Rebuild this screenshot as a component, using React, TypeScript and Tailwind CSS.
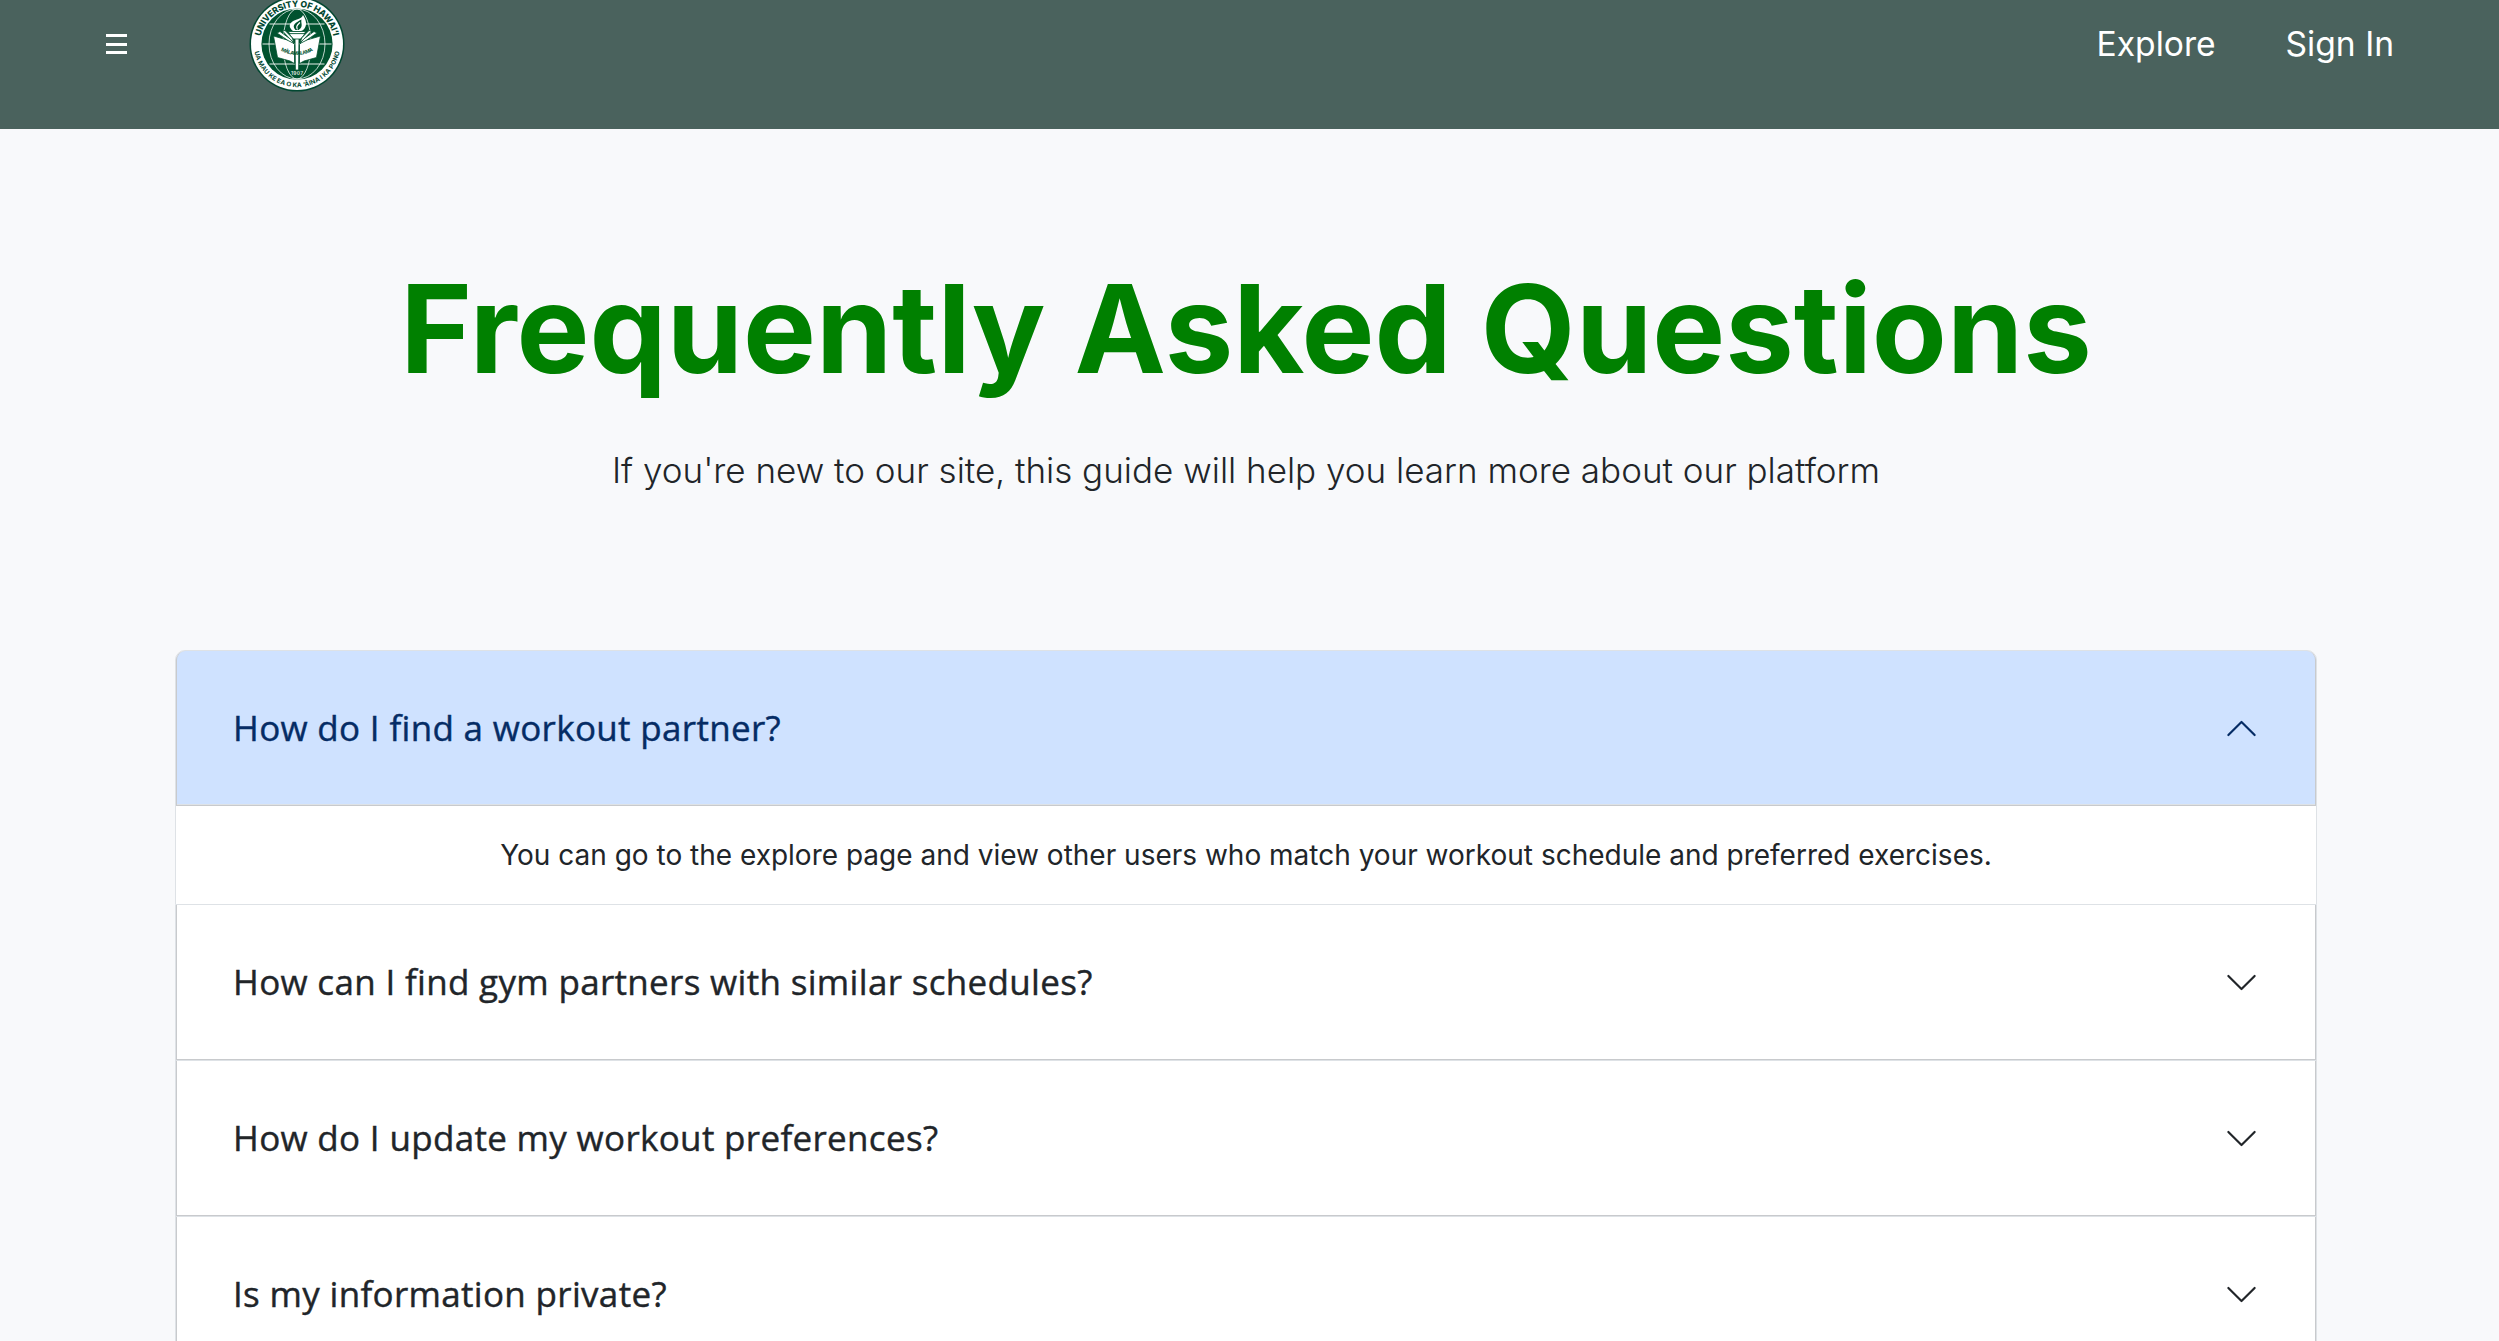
import { useState } from "react";

type Faq = { question: string; answer: string };

const faqs: Faq[] = [
  {
    question: "How do I find a workout partner?",
    answer:
      "You can go to the explore page and view other users who match your workout schedule and preferred exercises.",
  },
  { question: "How can I find gym partners with similar schedules?", answer: "" },
  { question: "How do I update my workout preferences?", answer: "" },
  { question: "Is my information private?", answer: "" },
];

function Seal() {
  return (
    <svg viewBox="-48 -48 96 96" className="size-24" aria-label="University of Hawaiʻi seal">
      <defs>
        <path id="seal-top" d="M-37.2 0A37.2 37.2 0 0 1 37.2 0" />
        <path id="seal-bottom" d="M-43.2 0A43.2 43.2 0 0 0 43.2 0" />
        <path id="seal-motto" d="M-18.500 5.500Q-9 11 0 11Q9 11 18.500 5.500" />
      </defs>
      <circle r="47.5" fill="#024731" />
      <circle r="46" fill="#fff" />
      <circle r="35.6" fill="#00522f" />
      <g fill="none" stroke="#fff" strokeOpacity="0.75" strokeWidth="1">
        <ellipse rx="28" ry="35" />
        <ellipse rx="14" ry="35" />
        <path d="M-27.5 -20H27.5M-34.5 0H34.5M-27.5 20H27.5" strokeWidth="1.4" strokeOpacity="0.6" />
      </g>
      <g fill="#fff" stroke="#00522f" strokeWidth="0.8">
        <path d="M-23.500 -8L-8 -3.500Q-4 -2 -2.500 0.500V19.500L-7 17L-19.500 13.500Z" />
        <path d="M23.500 -8L8 -3.500Q4 -2 2.500 0.500V19.500L7 17L19.500 13.500Z" />
        <path d="M-20 -11L-17 -12.500L-6 -4.500L-3 -0.500L-9 -3.500Z" />
        <path d="M20 -11L17 -12.500L6 -4.500L3 -0.500L9 -3.500Z" />
        <path d="M-14.500 -13L-12 -13.500L-5 -6.500L-3 -1.500L-6.500 -4.500Z" />
        <path d="M14.500 -13L12 -13.500L5 -6.500L3 -1.500L6.500 -4.500Z" />
        <path d="M-2 -6H2L1.600 26H-1.600Z" />
        <path d="M-8.500 -12.500H8.500L7 -9L3.500 -5H-3.500L-7 -9Z" />
      </g>
      <path d="M-8 -10.400H8" stroke="#00522f" strokeWidth="0.9" />
      <path
        d="M-4 -13C-11 -19 -5 -23 0 -24.500C4 -26 5.500 -27 6 -29C8.500 -25 10 -21 8.500 -17.500C7.500 -15 6 -13.500 4 -13Z"
        fill="#fff"
      />
      <path d="M-1.500 -14C-6 -19 -1 -21.500 4.500 -24.500C3.500 -21 7 -17 1.500 -14Z" fill="#00522f" />
      <path d="M0.500 -14.500C-2 -18 1.500 -20 3 -21.500" stroke="#fff" strokeWidth="1.200" fill="none" />
      <g fontFamily="Inter, sans-serif" fontWeight="700" textAnchor="middle">
        <text fontSize="8.600" fontWeight="800" fill="#024731">
          <textPath href="#seal-top" startOffset="50%" textLength="101">UNIVERSITY OF HAWAI‘I</textPath>
        </text>
        <text fontSize="6.300" fill="#024731">
          <textPath href="#seal-bottom" startOffset="50%" textLength="120">UA MAU KE EA O KA ‘ĀINA I KA PONO</textPath>
        </text>
        <text fontSize="5" fill="#00522f">
          <textPath href="#seal-motto" startOffset="50%" textLength="34">MĀLAMALAMA</textPath>
        </text>
        <text y="31" fontSize="4.800" fill="#fff" fillOpacity="0.85" textLength="12">1907</text>
      </g>
    </svg>
  );
}

function Navbar() {
  return (
    <header className="flex h-[129px] items-start justify-between bg-[#4a625d] pr-[105px] pl-[106px] text-white">
      <div className="flex h-[88px] items-center gap-[122px]">
        <button aria-label="Open menu">
          <svg viewBox="0 0 21 20" className="h-5 w-[21px]" fill="currentColor">
            <path d="M0 0h21v3H0zM0 9h21v3H0zM0 17h21v3H0z" />
          </svg>
        </button>
        <Seal />
      </div>
      <nav className="flex h-[88px] items-center gap-[70px] text-[33.6px] leading-[50px]">
        <a>Explore</a>
        <a>Sign In</a>
      </nav>
    </header>
  );
}

function Item({ faq, open, first, onToggle }: { faq: Faq; open: boolean; first: boolean; onToggle: () => void }) {
  const shape = first ? "rounded-t-[10px] border-t" : "";
  const tone = open
    ? "bg-[#cfe2ff] text-[#052c65] shadow-[inset_0_-1px_0_#dee2e6]"
    : "bg-white text-[#212529]";
  return (
    <div className={`border-x border-b border-[#dee2e6] bg-white ${shape}`}>
      <button
        onClick={onToggle}
        className={`flex h-[155px] w-full items-center justify-between border-x border-b border-[#c8cacd] pr-14 pl-14 text-left font-['Open_Sans',sans-serif] text-[35px] leading-[42px] font-medium tracking-[0.32px] ${tone} ${first ? "rounded-t-[9px]" : ""}`}
      >
        <span className="pb-px [-webkit-text-stroke:0.4px_currentColor]">{faq.question}</span>
        <svg viewBox="0 0 16 16" className={`size-[35px] ${open ? "rotate-180" : ""}`} fill="currentColor">
          <path
            fillRule="evenodd"
            d="M1.646 4.646a.5.5 0 0 1 .708 0L8 10.293l5.646-5.647a.5.5 0 0 1 .708.708l-6 6a.5.5 0 0 1-.708 0l-6-6a.5.5 0 0 1 0-.708z"
          />
        </svg>
      </button>
      {open && <p className="px-[35px] py-7 text-center text-[28px] leading-[42px]">{faq.answer}</p>}
    </div>
  );
}

export default function App() {
  const [active, setActive] = useState(0);
  return (
    <div className="h-[1341px] overflow-hidden bg-[#f8f9fb] font-['Inter',sans-serif] text-[#212529]">
      <Navbar />
      <main className="mr-[182px] ml-[175px] flex flex-col pt-[126px]">
        <h1 className="text-center text-[122.5px] leading-[147px] font-bold text-[#008000]">
          Frequently Asked Questions
        </h1>
        <p className="mt-[42px] text-center text-[35px] leading-[52px] font-light">
          If you're new to our site, this guide will help you learn more about our platform
        </p>
        <section className="mt-[154px]">
          {faqs.map((faq, i) => (
            <Item
              key={faq.question}
              faq={faq}
              first={i === 0}
              open={active === i}
              onToggle={() => setActive(active === i ? -1 : i)}
            />
          ))}
        </section>
      </main>
    </div>
  );
}
